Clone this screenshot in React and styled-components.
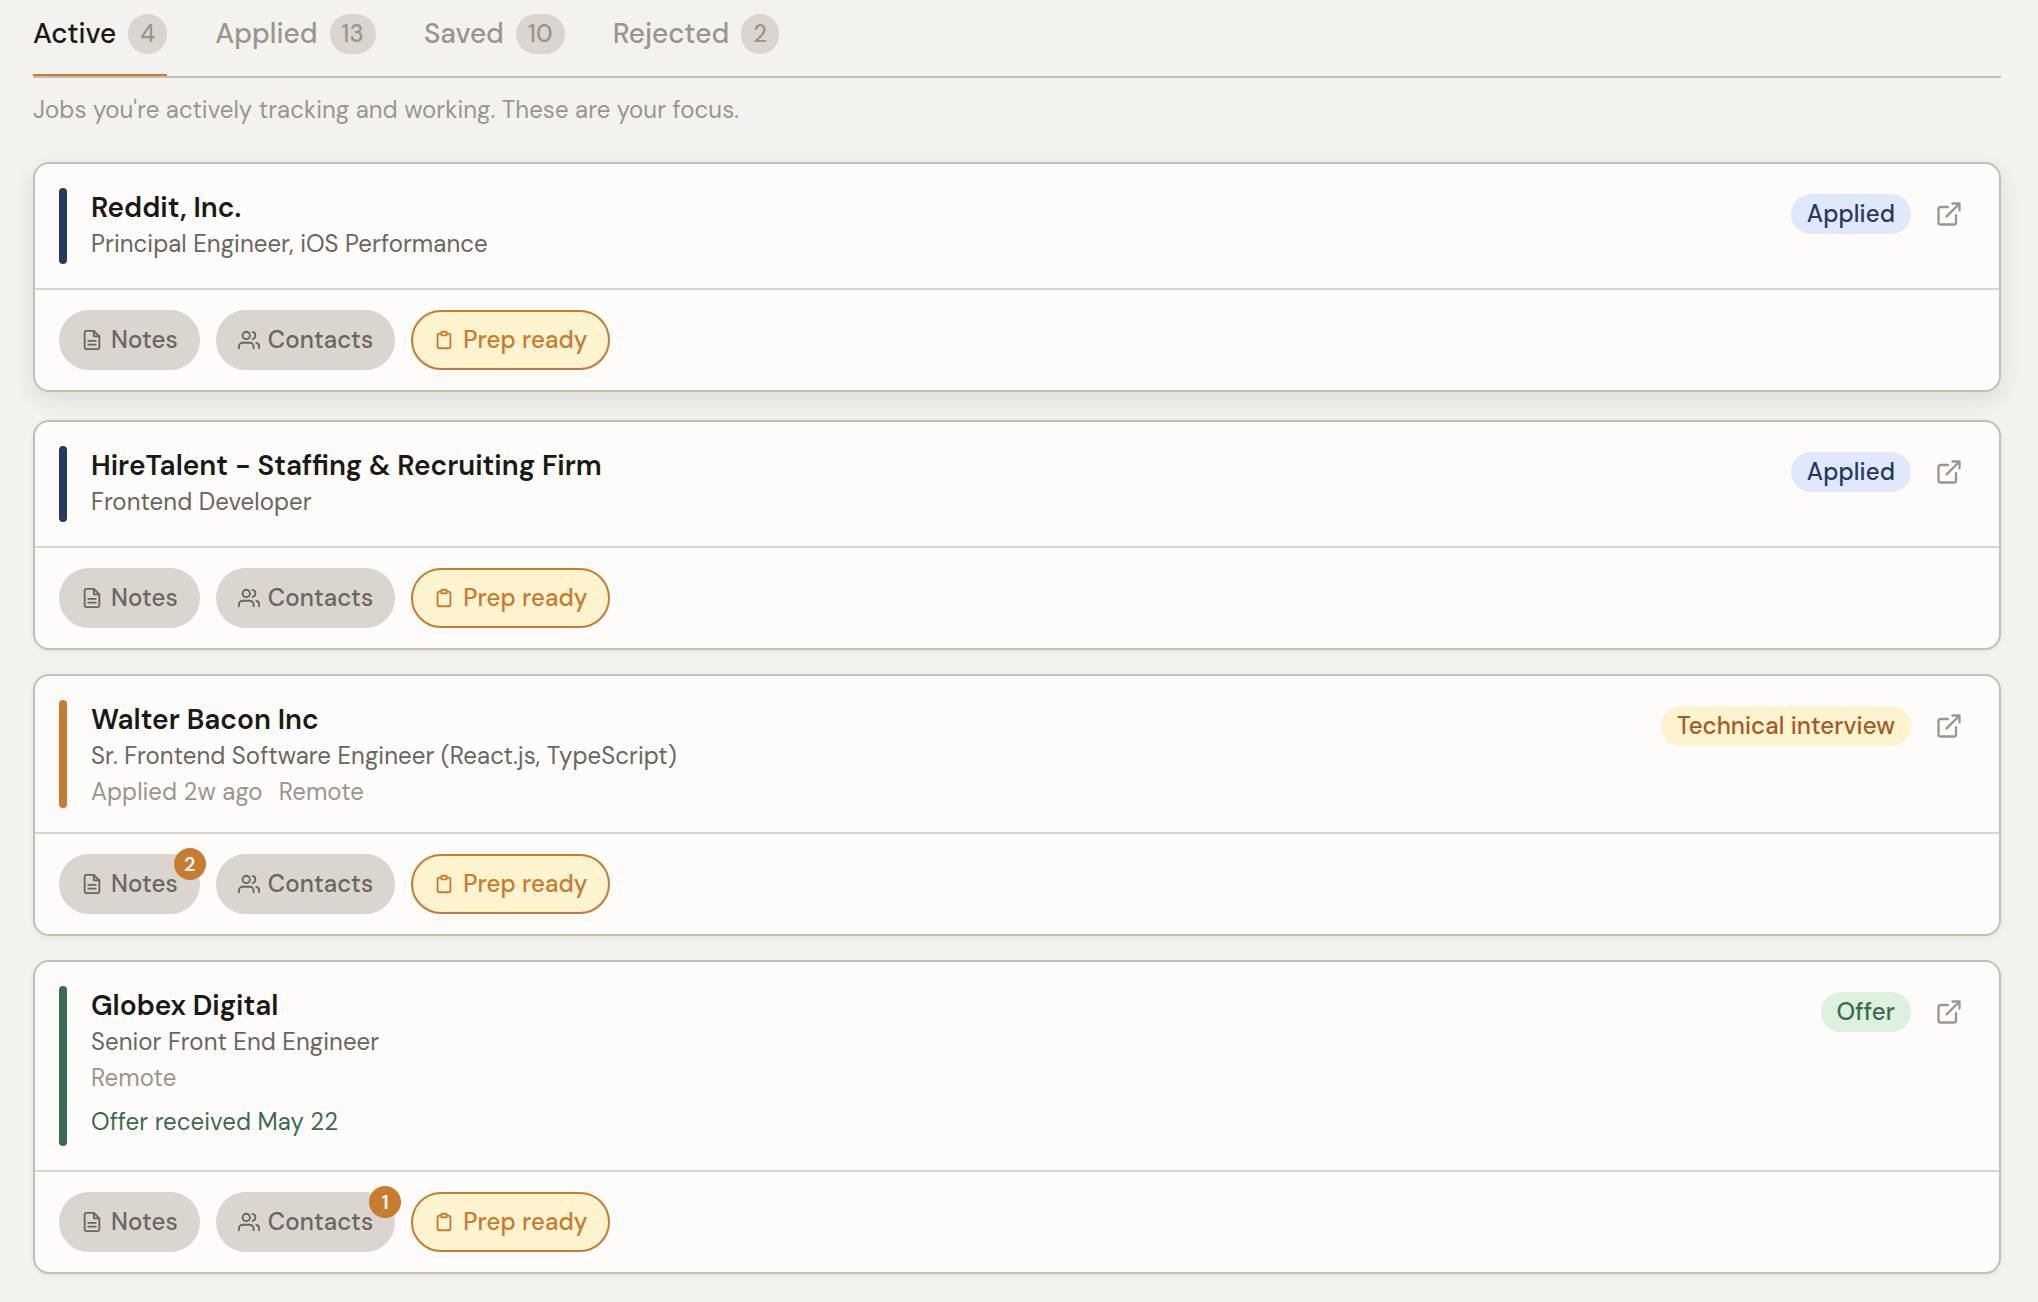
import React from 'react';
import styled, { createGlobalStyle, css } from 'styled-components';

const color = {
  page: '#f4f2ee',
  card: '#fdfcfa',
  line: '#c5beb5',
  soft: '#dad5cf',
  ink: '#1a1916',
  mid: '#6b6560',
  muted: '#9c958d',
  amber: '#c97b2e',
  amberSoft: '#fcf3cf',
  amberDark: '#a85a24',
  navy: '#243a5e',
  navySoft: '#dfe9fb',
  green: '#3d6b4f',
  greenSoft: '#dcf1de',
};

const GlobalStyle = createGlobalStyle`
  *, *::before, *::after { box-sizing: border-box; }
  body {
    margin: 0;
    background: ${color.page};
    color: ${color.ink};
    font-family: 'DM Sans', Inter, 'Open Sans', sans-serif;
    font-size: 24px;
    letter-spacing: 0.055px;
    -webkit-font-smoothing: antialiased;
  }
  button { font: inherit; letter-spacing: inherit; color: inherit; margin: 0; }
`;

const Page = styled.main`
  min-height: 1302px;
  padding: 0 37px 28px 33px;
`;

const TabList = styled.nav`
  display: flex;
  gap: 48px;
  border-bottom: 2px solid ${color.line};
`;

const Tab = styled.button`
  display: flex;
  align-items: center;
  gap: 12px;
  padding: 14px 0 20px;
  border: 0;
  border-bottom: 2px solid ${p => (p.$active ? color.amber : 'transparent')};
  background: none;
  color: ${p => (p.$active ? color.ink : color.muted)};
  font-size: 28px;
  font-weight: 500;
  line-height: 36px;
  letter-spacing: 0;
`;

const TabCount = styled.span`
  padding: 0 12px;
  border-radius: 20px;
  background: ${color.soft};
  color: ${color.muted};
  font-size: 24px;
  line-height: 40px;
  letter-spacing: 0.15px;
`;

const Description = styled.p`
  margin: 16px 0 40px;
  color: ${color.muted};
  line-height: 32px;
`;

const JobList = styled.section`
  display: flex;
  flex-direction: column;
  gap: 24px;
`;

const Card = styled.article`
  border: 2px solid ${color.line};
  border-radius: 16px;
  background: ${color.card};
  box-shadow: 0 2px 6px rgba(26, 25, 22, 0.06);
  ${p => p.$raised && css`
    transform: translateY(-4px);
    box-shadow: 0 8px 24px rgba(26, 25, 22, 0.1);
  `}
`;

const CardHeader = styled.header`
  display: flex;
  align-items: flex-start;
  padding: 24px;
  border-bottom: 2px solid ${color.soft};
`;

const StageBar = styled.span`
  align-self: stretch;
  width: 8px;
  margin-right: 24px;
  border-radius: 4px;
  background: ${p => p.$tone};
`;

const Details = styled.div`
  flex: 1;
`;

const Company = styled.h2`
  margin: 0;
  font-size: 28px;
  font-weight: 600;
  line-height: 39px;
  letter-spacing: 0;
`;

const Role = styled.p`
  margin: 0 0 3px;
  color: ${color.mid};
  line-height: 34px;
`;

const Meta = styled.p`
  display: flex;
  gap: 16px;
  margin: 0;
  color: ${color.muted};
  line-height: 32px;
`;

const Milestone = styled.p`
  margin: 12px 0 0;
  padding-bottom: 8px;
  color: ${color.green};
  line-height: 32px;
`;

const Status = styled.span`
  margin-top: 6px;
  padding: 0 16px;
  border-radius: 20px;
  background: ${p => p.$tone.bg};
  color: ${p => p.$tone.fg};
  font-weight: 500;
  line-height: 40px;
  letter-spacing: 0.08px;
`;

const OpenLink = styled.button`
  display: grid;
  place-items: center;
  width: 52px;
  height: 52px;
  margin-left: 12px;
  padding: 0;
  border: 0;
  background: none;
  color: ${color.muted};
`;

const Actions = styled.footer`
  display: flex;
  gap: 16px;
  padding: 20px 24px;
`;

const ActionButton = styled.button`
  position: relative;
  display: flex;
  align-items: center;
  gap: 8px;
  height: 60px;
  padding: 0 20px;
  border: 2px solid ${p => (p.$highlight ? color.amber : color.soft)};
  border-radius: 30px;
  background: ${p => (p.$highlight ? color.amberSoft : color.soft)};
  color: ${p => (p.$highlight ? color.amber : color.mid)};
  font-weight: 500;
  line-height: 32px;
  letter-spacing: 0.1px;
`;

const CountBadge = styled.span`
  position: absolute;
  top: -8px;
  right: -8px;
  width: 32px;
  height: 32px;
  border-radius: 50%;
  background: ${color.amber};
  color: ${color.card};
  font-size: 20px;
  font-weight: 600;
  line-height: 32px;
  text-align: center;
`;

const Icon = styled.svg.attrs({ viewBox: '0 0 24 24', 'aria-hidden': true })`
  flex: none;
  width: ${p => p.$size}px;
  height: ${p => p.$size}px;
  fill: none;
  stroke: currentColor;
  stroke-width: 2;
  stroke-linecap: round;
  stroke-linejoin: round;
`;

const NotesIcon = () => (
  <Icon $size={22}>
    <path d="M14 2H6a2 2 0 0 0-2 2v16a2 2 0 0 0 2 2h12a2 2 0 0 0 2-2V8z" />
    <path d="M14 2v6h6M16 13H8M16 17H8" />
  </Icon>
);

const ContactsIcon = () => (
  <Icon $size={22}>
    <path d="M17 21v-2a4 4 0 0 0-4-4H5a4 4 0 0 0-4 4v2" />
    <circle cx="9" cy="7" r="4" />
    <path d="M23 21v-2a4 4 0 0 0-3-3.87M16 3.13a4 4 0 0 1 0 7.75" />
  </Icon>
);

const PrepIcon = () => (
  <Icon $size={22}>
    <path d="M9 5H7a2 2 0 0 0-2 2v12a2 2 0 0 0 2 2h10a2 2 0 0 0 2-2V7a2 2 0 0 0-2-2h-2" />
    <rect x="9" y="3" width="6" height="4" rx="1" />
  </Icon>
);

const ExternalIcon = () => (
  <Icon $size={28}>
    <path d="M18 13v6a2 2 0 0 1-2 2H5a2 2 0 0 1-2-2V8a2 2 0 0 1 2-2h6" />
    <path d="M15 3h6v6M10 14 21 3" />
  </Icon>
);

const stages = {
  applied: { label: 'Applied', bar: color.navy, fg: color.navy, bg: color.navySoft },
  technical: { label: 'Technical interview', bar: color.amber, fg: color.amberDark, bg: color.amberSoft },
  offer: { label: 'Offer', bar: color.green, fg: color.green, bg: color.greenSoft },
};

const tabs = [
  { label: 'Active', count: 4 },
  { label: 'Applied', count: 13 },
  { label: 'Saved', count: 10 },
  { label: 'Rejected', count: 2 },
];

const jobs = [
  { company: 'Reddit, Inc.', role: 'Principal Engineer, iOS Performance', stage: 'applied', raised: true },
  { company: 'HireTalent - Staffing & Recruiting Firm', role: 'Frontend Developer', stage: 'applied' },
  {
    company: 'Walter Bacon Inc',
    role: 'Sr. Frontend Software Engineer (React.js, TypeScript)',
    stage: 'technical',
    meta: ['Applied 2w ago', 'Remote'],
    notes: 2,
  },
  {
    company: 'Globex Digital',
    role: 'Senior Front End Engineer',
    stage: 'offer',
    meta: ['Remote'],
    milestone: 'Offer received May 22',
    contacts: 1,
  },
];

function JobCard({ job }) {
  const stage = stages[job.stage];
  return (
    <Card $raised={job.raised}>
      <CardHeader>
        <StageBar $tone={stage.bar} />
        <Details>
          <Company>{job.company}</Company>
          <Role>{job.role}</Role>
          {job.meta && <Meta>{job.meta.map(item => <span key={item}>{item}</span>)}</Meta>}
          {job.milestone && <Milestone>{job.milestone}</Milestone>}
        </Details>
        <Status $tone={stage}>{stage.label}</Status>
        <OpenLink aria-label="Open job posting"><ExternalIcon /></OpenLink>
      </CardHeader>
      <Actions>
        <ActionButton>
          <NotesIcon />Notes
          {job.notes && <CountBadge>{job.notes}</CountBadge>}
        </ActionButton>
        <ActionButton>
          <ContactsIcon />Contacts
          {job.contacts && <CountBadge>{job.contacts}</CountBadge>}
        </ActionButton>
        <ActionButton $highlight><PrepIcon />Prep ready</ActionButton>
      </Actions>
    </Card>
  );
}

export default function App() {
  return (
    <Page>
      <GlobalStyle />
      <TabList>
        {tabs.map((tab, i) => (
          <Tab key={tab.label} $active={i === 0}>
            {tab.label}
            <TabCount>{tab.count}</TabCount>
          </Tab>
        ))}
      </TabList>
      <Description>Jobs you're actively tracking and working. These are your focus.</Description>
      <JobList>
        {jobs.map(job => <JobCard key={job.company} job={job} />)}
      </JobList>
    </Page>
  );
}
